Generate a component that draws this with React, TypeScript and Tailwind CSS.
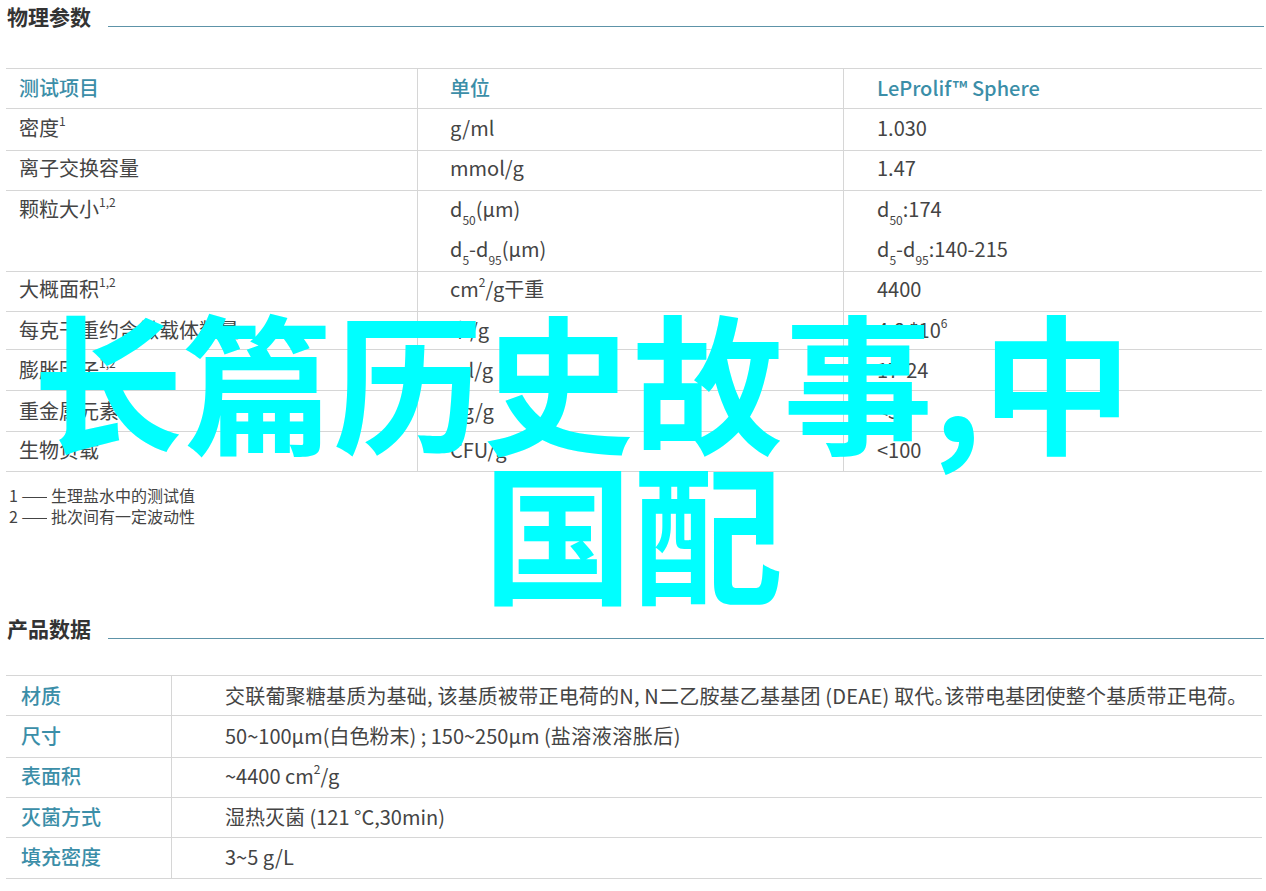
const cjk = "font-['Noto_Sans_CJK_SC','Noto_Sans',sans-serif]";

function Sup({ children }: { children: string }) {
  return <sup className="text-[12px] leading-none align-[4px]">{children}</sup>;
}

function Sub({ children }: { children: string }) {
  return <sub className="text-[12px] leading-none align-[-5px]">{children}</sub>;
}

function SectionTitle({ title, className }: { title: string; className?: string }) {
  return (
    <div className={`flex h-[27px] items-end pl-[7px] pr-[2px] ${className}`}>
      <h2 className="h-[27px] w-[101px] shrink-0 pt-[1px] text-[21px] leading-[30px] font-bold text-[#333]">{title}</h2>
      <div className="h-px flex-1 bg-[#5d93a8]" />
    </div>
  );
}

function SpecRow({ height, pad, cells, head }: { height: string; pad: string; cells: React.ReactNode[]; head?: boolean }) {
  return (
    <div className={`grid grid-cols-[412px_426px_1fr] border-b border-[#d6d6d6] ${height} ${head ? "font-medium text-[#3b8ea8]" : "text-[#444]"}`}>
      <div className={`border-r border-[#d6d6d6] pl-[13px] ${pad}`}>{cells[0]}</div>
      <div className={`border-r border-[#d6d6d6] pl-[32px] ${pad}`}>{cells[1]}</div>
      <div className={`pl-[33px] ${pad}`}>{cells[2]}</div>
    </div>
  );
}

function DataRow({ height, pad, label, value }: { height: string; pad: string; label: string; value: React.ReactNode }) {
  return (
    <div className={`grid grid-cols-[166px_1fr] border-b border-[#d6d6d6] ${height}`}>
      <div className={`border-r border-[#d6d6d6] pl-[15px] font-medium text-[#3b8ea8] ${pad}`}>{label}</div>
      <div className={`pl-[53px] text-[#444] ${pad}`}>{value}</div>
    </div>
  );
}

export default function App() {
  return (
    <div className={`relative h-[891px] w-[1266px] overflow-hidden bg-white text-[20px] leading-[30px] ${cjk}`}>
      <SectionTitle title="物理参数" />

      <div className="ml-[6px] mr-[4px] mt-[41px] border-t border-[#d6d6d6]">
        <SpecRow head height="h-[40px]" pad="pt-[4px]" cells={["测试项目", "单位", "LeProlif™ Sphere"]} />
        <SpecRow height="h-[42px]" pad="pt-[4px]" cells={[<>密度<Sup>1</Sup></>, "g/ml", "1.030"]} />
        <SpecRow height="h-[40px]" pad="pt-[2px]" cells={["离子交换容量", "mmol/g", "1.47"]} />
        <SpecRow
          height="h-[81px]"
          pad="pt-[3px]"
          cells={[
            <>颗粒大小<Sup>1,2</Sup></>,
            <div className="flex flex-col gap-[10px]">
              <div>d<Sub>50</Sub>(µm)</div>
              <div>d<Sub>5</Sub>-d<Sub>95</Sub>(µm)</div>
            </div>,
            <div className="flex flex-col gap-[10px]">
              <div>d<Sub>50</Sub>:174</div>
              <div>d<Sub>5</Sub>-d<Sub>95</Sub>:140-215</div>
            </div>,
          ]}
        />
        <SpecRow height="h-[40px]" pad="pt-[2px]" cells={[<>大概面积<Sup>1,2</Sup></>, <>cm<Sup>2</Sup>/g干重</>, "4400"]} />
        <SpecRow height="h-[38px]" pad="pt-[3px]" cells={["每克干重约含微载体数量", "个/g", <>4.8 *10<Sup>6</Sup></>]} />
        <SpecRow height="h-[41px]" pad="pt-[5px]" cells={[<>膨胀因子<Sup>1,2</Sup></>, "ml/g", "17-24"]} />
        <SpecRow height="h-[41px]" pad="pt-[5px]" cells={["重金属元素", "µg/g", "<5"]} />
        <SpecRow height="h-[40px]" pad="pt-[3px]" cells={["生物负载", "CFU/g", "<100"]} />
      </div>

      <div className="ml-[9px] mt-[13px] text-[16px] leading-[21px] text-[#444]">
        <p>1 <span className="inline-block w-[26px] overflow-hidden align-bottom">——</span> 生理盐水中的测试值</p>
        <p>2 <span className="inline-block w-[26px] overflow-hidden align-bottom">——</span> 批次间有一定波动性</p>
      </div>

      <SectionTitle title="产品数据" className="mt-[85px]" />

      <div className="ml-[6px] mr-[4px] mt-[36px] border-t border-[#d6d6d6]">
        <DataRow
          height="h-[40px]"
          pad="pt-[5px]"
          label="材质"
          value={<span className="tracking-[0.2px]">交联葡聚糖基质为基础, 该基质被带正电荷的N, N二乙胺基乙基基团 (DEAE) 取代<span className="tracking-[-10px]">。</span>该带电基团使整个基质带正电荷。</span>}
        />
        <DataRow height="h-[42px]" pad="pt-[5px]" label="尺寸" value={<>50~100µm(白色粉末) ; 150~250µm (<span className="tracking-[0.5px]">盐溶液溶胀后</span>)</>} />
        <DataRow height="h-[40px]" pad="pt-[3px]" label="表面积" value={<>~4400 cm<Sup>2</Sup>/g</>} />
        <DataRow height="h-[40px]" pad="pt-[4px]" label="灭菌方式" value="湿热灭菌 (121 °C,30min)" />
        <DataRow height="h-[41px]" pad="pt-[4px]" label="填充密度" value="3~5 g/L" />
      </div>

      <div className="absolute left-[33px] top-[303px] whitespace-nowrap text-[150px] leading-[150px] font-bold text-[#00ffff]">
        <div>长篇历史故事,中</div>
        <div className="ml-[450px]">国配</div>
      </div>
    </div>
  );
}
